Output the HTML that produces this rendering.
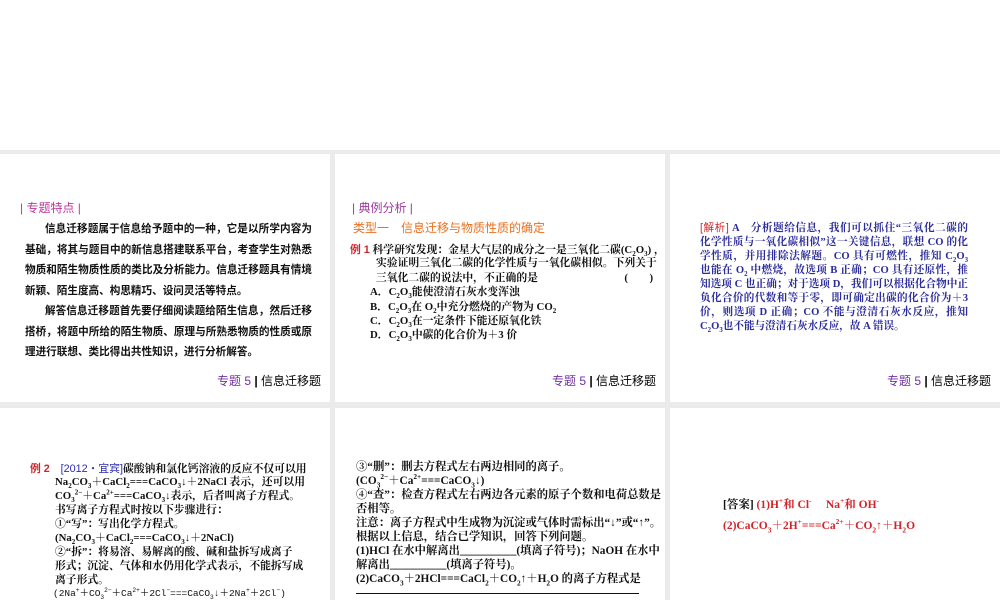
<!DOCTYPE html>
<html><head><meta charset="utf-8"><style>
*{margin:0;padding:0;box-sizing:border-box}
body{width:1000px;height:600px;background:#fff;position:relative;overflow:hidden;font-family:"Liberation Serif","Noto Serif CJK SC",serif}
.g{position:absolute;background:#ebebeb}
.s{position:absolute;background:#fff;overflow:hidden}
.l{position:absolute;white-space:nowrap;font-weight:bold}
.h{font-family:"Liberation Sans","Noto Sans CJK SC",sans-serif}
.ft{position:absolute;font-family:"Liberation Sans","Noto Sans CJK SC",sans-serif;font-size:12px;white-space:nowrap}
.j{white-space:nowrap;text-align:justify;text-align-last:justify}
.n{white-space:nowrap}
sub,sup{font-size:65%;line-height:0}
</style></head><body>
<div class="g" style="left:0;top:150px;width:1000px;height:450px"></div>

<div class="s" style="left:0;top:154px;width:330px;height:248px"></div>
<div class="s" style="left:335px;top:154px;width:330px;height:248px"></div>
<div class="s" style="left:670px;top:154px;width:330px;height:248px"></div>
<div class="s" style="left:0;top:408px;width:330px;height:192px"></div>
<div class="s" style="left:335px;top:408px;width:330px;height:192px"></div>
<div class="s" style="left:670px;top:408px;width:330px;height:192px"></div>

<!-- slide 1 -->
<div class="l h" style="left:20px;top:199px;font-size:12px;color:#c0369e;font-weight:normal">| 专题特点 |</div>
<div class="h" style="position:absolute;left:25px;top:219px;width:287px;font-size:10.6px;line-height:20.5px;font-weight:bold;color:#111">
<div class="j" style="padding-left:20px">信息迁移题属于信息给予题中的一种，它是以所学内容为</div>
<div class="j">基础，将其与题目中的新信息搭建联系平台，考查学生对熟悉</div>
<div class="j">物质和陌生物质性质的类比及分析能力。信息迁移题具有情境</div>
<div class="n">新颖、陌生度高、构思精巧、设问灵活等特点。</div>
<div class="j" style="padding-left:20px">解答信息迁移题首先要仔细阅读题给陌生信息，然后迁移</div>
<div class="j">搭桥，将题中所给的陌生物质、原理与所熟悉物质的性质或原</div>
<div class="n">理进行联想、类比得出共性知识，进行分析解答。</div>
</div>
<div class="ft" style="left:217px;top:372px"><span style="color:#7030a0">专题 5</span> <b>|</b> 信息迁移题</div>

<!-- slide 2 -->
<div class="l h" style="left:352px;top:199px;font-size:12px;color:#9b3aa0;font-weight:normal">| 典例分析 |</div>
<div class="l h" style="left:353px;top:219px;font-size:12px;color:#e9701e;font-weight:normal">类型一　信息迁移与物质性质的确定</div>
<div style="position:absolute;left:350px;top:241px;font-size:10.8px;color:#111">
<div class="l" style="left:0;top:0"><span class="h" style="color:#d0242a">例 1</span> 科学研究发现：金星大气层的成分之一是三氧化二碳(C<sub>2</sub>O<sub>3</sub>) ，</div>
<div class="l" style="left:26px;top:14.4px">实验证明三氧化二碳的化学性质与一氧化碳相似。下列关于</div>
<div class="l" style="left:26px;top:28.8px">三氧化二碳的说法中，不正确的是　　　　　　　　(　　)</div>
<div class="l" style="left:20px;top:43.2px">A．C<sub>2</sub>O<sub>3</sub>能使澄清石灰水变浑浊</div>
<div class="l" style="left:20px;top:57.6px">B．C<sub>2</sub>O<sub>3</sub>在 O<sub>2</sub>中充分燃烧的产物为 CO<sub>2</sub></div>
<div class="l" style="left:20px;top:72px">C．C<sub>2</sub>O<sub>3</sub>在一定条件下能还原氧化铁</div>
<div class="l" style="left:20px;top:86.4px">D．C<sub>2</sub>O<sub>3</sub>中碳的化合价为＋3 价</div>
</div>
<div class="ft" style="left:552px;top:372px"><span style="color:#7030a0">专题 5</span> <b>|</b> 信息迁移题</div>

<!-- slide 3 -->
<div style="position:absolute;left:700px;top:221px;width:268px;font-size:10.6px;line-height:14px;font-weight:bold;color:#2b2b9a">
<div class="j"><span style="color:#d0242a;font-weight:normal" class="h">[解析]</span> A　分析题给信息，我们可以抓住“三氧化二碳的</div>
<div class="j">化学性质与一氧化碳相似”这一关键信息，联想 CO 的化</div>
<div class="j">学性质，并用排除法解题。CO 具有可燃性，推知 C<sub>2</sub>O<sub>3</sub></div>
<div class="j">也能在 O<sub>2</sub> 中燃烧，故选项 B 正确；CO 具有还原性，推</div>
<div class="j">知选项 C 也正确；对于选项 D，我们可以根据化合物中正</div>
<div class="j">负化合价的代数和等于零，即可确定出碳的化合价为＋3</div>
<div class="j">价，则选项 D 正确；CO 不能与澄清石灰水反应，推知</div>
<div class="n">C<sub>2</sub>O<sub>3</sub>也不能与澄清石灰水反应，故 A 错误。</div>
</div>
<div class="ft" style="left:887px;top:372px"><span style="color:#7030a0">专题 5</span> <b>|</b> 信息迁移题</div>

<!-- slide 4 -->
<div style="position:absolute;left:30px;top:460px;font-size:10.8px;color:#111">
<div class="l" style="left:0;top:0"><span class="h" style="color:#d0242a">例 2</span>　<span class="h" style="color:#2b2bb0;font-weight:normal">[2012・宜宾]</span>碳酸钠和氯化钙溶液的反应不仅可以用</div>
<div class="l" style="left:25px;top:14px">Na<sub>2</sub>CO<sub>3</sub>＋CaCl<sub>2</sub>===CaCO<sub>3</sub>↓＋2NaCl 表示，还可以用</div>
<div class="l" style="left:25px;top:28px">CO<sub>3</sub><sup>2−</sup>＋Ca<sup>2+</sup>===CaCO<sub>3</sub>↓表示，后者叫离子方程式。</div>
<div class="l" style="left:25px;top:42px">书写离子方程式时按以下步骤进行：</div>
<div class="l" style="left:25px;top:56px">①“写”：写出化学方程式。</div>
<div class="l" style="left:25px;top:70px">(Na<sub>2</sub>CO<sub>3</sub>＋CaCl<sub>2</sub>===CaCO<sub>3</sub>↓＋2NaCl)</div>
<div class="l" style="left:25px;top:84px">②“拆”：将易溶、易解离的酸、碱和盐拆写成离子</div>
<div class="l" style="left:25px;top:98px">形式；沉淀、气体和水仍用化学式表示，不能拆写成</div>
<div class="l" style="left:25px;top:112px">离子形式。</div>
<div class="l" style="left:23px;top:125px;font-size:9.5px;font-weight:normal;font-family:'Liberation Mono','Noto Sans CJK SC',monospace">(2Na<sup>+</sup>＋CO<sub>3</sub><sup>2−</sup>＋Ca<sup>2+</sup>＋2Cl<sup>−</sup>===CaCO<sub>3</sub>↓＋2Na<sup>+</sup>＋2Cl<sup>−</sup>)</div>
</div>

<!-- slide 5 -->
<div style="position:absolute;left:356px;top:458px;font-size:11.3px;color:#111">
<div class="l" style="left:0;top:0">③“删”：删去方程式左右两边相同的离子。</div>
<div class="l" style="left:0;top:14px">(CO<sub>3</sub><sup>2−</sup>＋Ca<sup>2+</sup>===CaCO<sub>3</sub>↓)</div>
<div class="l" style="left:0;top:28px">④“查”：检查方程式左右两边各元素的原子个数和电荷总数是</div>
<div class="l" style="left:0;top:42px">否相等。</div>
<div class="l" style="left:0;top:56px">注意：离子方程式中生成物为沉淀或气体时需标出“↓”或“↑”。</div>
<div class="l" style="left:0;top:70px">根据以上信息，结合已学知识，回答下列问题。</div>
<div class="l" style="left:0;top:84px">(1)HCl 在水中解离出__________(填离子符号)；NaOH 在水中</div>
<div class="l" style="left:0;top:98px">解离出__________(填离子符号)。</div>
<div class="l" style="left:0;top:112px">(2)CaCO<sub>3</sub>＋2HCl===CaCl<sub>2</sub>＋CO<sub>2</sub>↑＋H<sub>2</sub>O 的离子方程式是</div>
</div>
<div style="position:absolute;left:356px;top:593px;width:283px;height:1px;background:#111"></div>

<!-- slide 6 -->
<div style="position:absolute;left:723px;top:496px;font-size:11.5px;color:#d0242a">
<div class="l" style="left:0;top:0"><span style="color:#111">[答案]</span> (1)H<sup>+</sup>和 Cl<sup>-</sup>　 Na<sup>+</sup>和 OH<sup>-</sup></div>
<div class="l" style="left:0;top:21px">(2)CaCO<sub>3</sub>＋2H<sup>+</sup>===Ca<sup>2+</sup>＋CO<sub>2</sub>↑＋H<sub>2</sub>O</div>
</div>
</body></html>
